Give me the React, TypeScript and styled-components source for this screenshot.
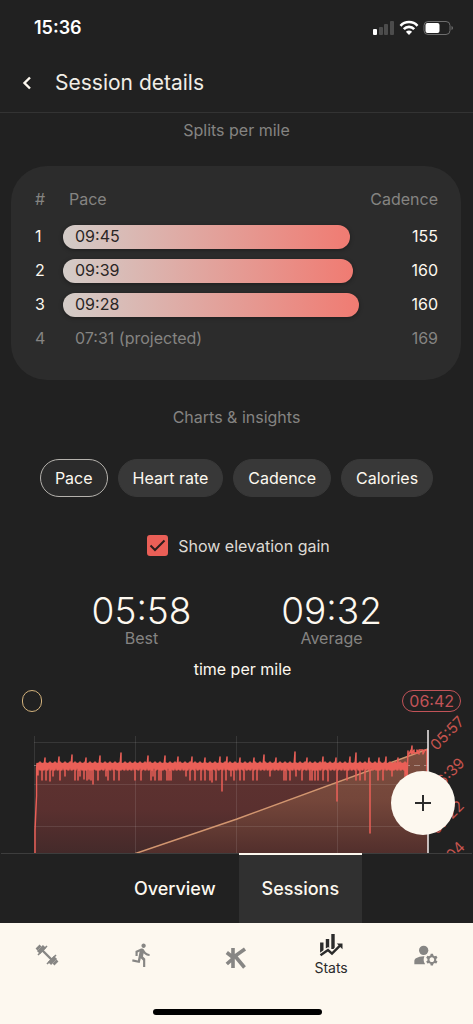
import React, { useState } from "react";
import styled, { createGlobalStyle } from "styled-components";
import { MdDirectionsRun, MdManageAccounts } from "react-icons/md";

const cream = "#fdf8ef";
const red = "#ea5f57";

const GlobalStyle = createGlobalStyle`
  *, *::before, *::after { box-sizing: border-box; }
  body {
    margin: 0;
    background: #000;
    color: ${cream};
    font: 400 16px/20px Inter, "Noto Sans", sans-serif;
  }
  button { font: inherit; color: inherit; border: 0; padding: 0; background: none; cursor: pointer; }
`;

const Screen = styled.div`
  display: flex;
  flex-direction: column;
  height: 100vh;
  background: #212121;
`;

const StatusBar = styled.div`
  display: flex;
  align-items: center;
  justify-content: space-between;
  height: 56px;
  padding: 0 19px 0 34px;
  color: #fff;
  font-size: 18px;
  font-weight: 600;
  flex-shrink: 0;
`;

const StatusIcons = styled.svg`
  width: 82px;
  height: 16px;
`;

const Header = styled.header`
  display: flex;
  align-items: center;
  gap: 17px;
  height: 57px;
  padding: 0 15px 2px;
  border-bottom: 1px solid #333;
  flex-shrink: 0;
`;

const BackButton = styled.button`
  display: grid;
  place-items: center;
  width: 23px;
  height: 32px;
`;

const Title = styled.h1`
  margin: 0;
  font-size: 21px;
  line-height: 28px;
  font-weight: 400;
  color: #f1ede6;
`;

const Body = styled.main`
  position: relative;
  flex: 1;
  min-height: 0;
  display: flex;
  flex-direction: column;
`;

const Scroller = styled.div`
  flex: 1;
  min-height: 0;
  overflow-x: hidden;
  overflow-y: auto;
  scrollbar-width: none;
  padding-top: 7px;
`;

const SectionTitle = styled.h2`
  margin: 0;
  text-align: center;
  font-size: 16px;
  line-height: 20px;
  font-weight: 400;
  color: #858482;
`;

const Card = styled.section`
  margin: 26px 12px 27px 11px;
  padding: 14px 23px 24px 24px;
  border-radius: 36px;
  background: #2c2c2c;
`;

const SplitsTable = styled.table`
  width: 100%;
  table-layout: fixed;
  border-collapse: collapse;
`;

const HeadCell = styled.th<{ $width?: number; $align?: string; $indent?: number }>`
  width: ${(p) => (p.$width ? `${p.$width}px` : "auto")};
  height: 40px;
  padding: 0 0 2px ${(p) => p.$indent ?? 0}px;
  text-align: ${(p) => p.$align ?? "left"};
  font-weight: 400;
  color: #858482;
`;

const Row = styled.tr<{ $muted?: boolean }>`
  height: 34px;
  color: ${(p) => (p.$muted ? "#858482" : cream)};
`;

const Cell = styled.td<{ $align?: string }>`
  padding: 0 0 2px;
  text-align: ${(p) => p.$align ?? "left"};
`;

const BarCell = styled.td`
  padding: 0;
`;

const PaceBar = styled.div<{ $filled: boolean }>`
  height: 24px;
  padding-left: 12px;
  line-height: 22px;
  border-radius: 12px;
  ${(p) =>
    p.$filled &&
    `
    color: #2a2625;
    background: linear-gradient(90deg, #d3ccc8, #f07b72);
    box-shadow: 0 1px 4px rgba(0, 0, 0, 0.35);
  `}
`;

const Chips = styled.div`
  display: flex;
  flex-wrap: wrap;
  justify-content: center;
  gap: 10px;
  margin-top: 32px;
`;

const Chip = styled.button<{ $active: boolean }>`
  height: 38px;
  padding: 0 14px;
  border: 1px solid ${(p) => (p.$active ? "#b5b2ad" : "#383838")};
  border-radius: 19px;
  background: ${(p) => (p.$active ? "#2b2b2b" : "#383838")};
`;

const CheckLabel = styled.label`
  display: flex;
  justify-content: center;
  align-items: center;
  gap: 10px;
  margin-top: 38px;
  padding-left: 4px;
  color: #dedad4;
`;

const CheckWrap = styled.span`
  position: relative;
  width: 21px;
  height: 21px;
  svg { position: absolute; inset: 0; pointer-events: none; }
`;

const CheckInput = styled.input`
  appearance: none;
  display: block;
  width: 21px;
  height: 21px;
  margin: 0;
  border: 2px solid ${red};
  border-radius: 3px;
  &:checked { background: ${red}; }
`;

const Figures = styled.div`
  display: grid;
  grid-template-columns: 190px 190px;
  justify-content: center;
  margin-top: 38px;
`;

const Figure = styled.div`
  text-align: center;
  color: #858482;
`;

const FigureValue = styled.div`
  font-size: 37px;
  line-height: 34px;
  font-weight: 300;
  color: ${cream};
`;

const Unit = styled.div`
  margin-top: 11px;
  padding-left: 12px;
  text-align: center;
`;

const Readouts = styled.div`
  display: flex;
  justify-content: space-between;
  margin-top: 11px;
  padding: 0 12px 0 22px;
`;

const Pill = styled.span<{ $tone: string }>`
  min-width: 20px;
  height: 22px;
  padding: 0 6px;
  line-height: 20px;
  border: 1px solid ${(p) => p.$tone};
  border-radius: 11px;
  color: ${(p) => p.$tone};
`;

const ChartSvg = styled.svg`
  display: block;
  width: 100%;
  margin-top: 18px;
  overflow: visible;
`;

const Fab = styled.button`
  position: absolute;
  right: 18px;
  bottom: 18px;
  display: grid;
  place-items: center;
  width: 64px;
  height: 64px;
  border-radius: 50%;
  background: ${cream};
`;

const Tabs = styled.div`
  display: flex;
  justify-content: center;
  height: 70px;
  margin: 0 1px;
  border-top: 1px solid #3d3d3d;
  flex-shrink: 0;
`;

const Tab = styled.button<{ $active: boolean }>`
  margin-top: -1px;
  padding: 0 23px;
  border-top: 2px solid ${(p) => (p.$active ? cream : "transparent")};
  background: ${(p) => (p.$active ? "#303030" : "transparent")};
  font-size: 18px;
  font-weight: 500;
`;

const BottomNav = styled.nav`
  display: grid;
  grid-template-columns: repeat(5, 1fr);
  height: 101px;
  padding-top: 8px;
  position: relative;
  background: ${cream};
  flex-shrink: 0;
`;

const NavButton = styled.button<{ $active?: boolean }>`
  display: flex;
  flex-direction: column;
  align-items: center;
  justify-content: center;
  gap: 2px;
  height: 48px;
  font-size: 14px;
  line-height: 18px;
  color: ${(p) => (p.$active ? "#2b2b2b" : "#878684")};
`;

const HomeIndicator = styled.div`
  position: absolute;
  bottom: 9px;
  left: 50%;
  width: 169px;
  height: 6px;
  margin-left: -84px;
  border-radius: 3px;
  background: #000;
`;

const splits = [
  { n: 1, pace: "09:45", share: 97, cadence: 155 },
  { n: 2, pace: "09:39", share: 98, cadence: 160 },
  { n: 3, pace: "09:28", share: 100, cadence: 160 },
  { n: 4, pace: "07:31 (projected)", share: 0, cadence: 169 },
];

const peaks: Record<number, number> = {
  45: 28, 59: 27, 72: 25, 86: 28, 100: 26, 121: 23, 148: 26, 165: 26, 178: 27, 192: 27, 205: 28,
  220: 27, 227: 27, 240: 28, 254: 28, 264: 25, 276: 28, 295: 22, 307: 28, 323: 27, 336: 28,
  350: 27, 356: 23, 369: 28, 379: 28, 386: 27, 398: 28,
};
const dips: Record<number, number> = {
  38: 45, 42: 50, 46: 50, 50: 51, 53: 46, 60: 50, 65: 46, 75: 50, 78: 50, 80: 46, 84: 49, 87: 50,
  89: 49, 91: 50, 93: 54, 98: 50, 106: 46, 108: 50, 114: 50, 119: 50, 135: 50, 141: 50, 151: 50,
  153: 46, 155: 50, 159: 50, 161: 50, 167: 50, 169: 50, 171: 50, 186: 46, 190: 50, 195: 50,
  201: 50, 205: 50, 210: 50, 212: 52, 216: 50, 222: 61, 226: 50, 231: 46, 234: 50, 240: 50,
  244: 50, 253: 50, 257: 50, 270: 46, 284: 50, 286: 50, 290: 50, 296: 46, 302: 50, 310: 50,
  312: 50, 315: 50, 318: 50, 323: 50, 328: 51, 337: 71, 347: 50, 356: 50, 360: 50, 365: 50,
  370: 103, 378: 50, 383: 50, 392: 46, 405: 48,
};

const paceTrace = (() => {
  let d = "M35 134V100L36.500 66V38";
  for (let x = 37; x < 407; x += 1) {
    const top = peaks[x] ?? 32 + ((x * x * 7) % 5) / 2;
    const low = dips[x] ?? 38 + ((x * x * 5) % 7) / 3;
    d += `L${x} ${top}V${low}L${x} 36`;
  }
  return `${d}L407 50L408 21V26L411 20V23L412 16V24L414 20V23H417V20L419 24V20H423V24L425 20H427V60`;
})();

const axis = ["05:57", "06:39", "07:22", "08:04"];

function Chart({ elevation }: { elevation: boolean }) {
  return (
    <ChartSvg viewBox="0 0 473 134" role="img" aria-label="Pace over time">
      <defs>
        <linearGradient id="paceFill" x1="0" y1="36" x2="0" y2="123" gradientUnits="userSpaceOnUse">
          <stop offset="0" stopColor="#5e3230" />
          <stop offset="0.5" stopColor="#5a302f" />
          <stop offset="1" stopColor="#442a2a" />
        </linearGradient>
        <linearGradient id="elevationFill" x1="0" y1="20" x2="0" y2="123" gradientUnits="userSpaceOnUse">
          <stop offset="0" stopColor="#7d4f40" />
          <stop offset="0.5" stopColor="#74463a" />
          <stop offset="1" stopColor="#522f2c" />
        </linearGradient>
      </defs>
      <path d="M35 134V100L37 36H407L409 22H428V134Z" fill="url(#paceFill)" />
      {elevation && <path d="M104 134L137 123L237 89L428 19V134Z" fill="url(#elevationFill)" />}
      <path
        d="M34.500 6V134M135.500 6V134M236.500 6V134M337.500 6V134M34 12.500H428M34 54.500H428M34 96.500H428"
        stroke="#fff"
        strokeOpacity="0.1"
      />
      <path d="M34 35.500H428" stroke="#fff" strokeOpacity="0.35" strokeDasharray="6 4" />
      {elevation && <path d="M104 134L137 123L237 89L428 19" fill="none" stroke="#d29670" strokeWidth="1.500" />}
      <path d={paceTrace} fill="none" stroke={red} strokeWidth="1.500" strokeLinejoin="round" />
      <path d="M428 0V134" stroke="#f3eeee" strokeWidth="1.500" />
      {axis.map((label, i) => (
        <text
          key={label}
          transform={`translate(447 ${3 + i * 42}) rotate(-45)`}
          textAnchor="middle"
          dominantBaseline="central"
          fontSize="15"
          fill="#c6544e"
        >
          {label}
        </text>
      ))}
    </ChartSvg>
  );
}

function DumbbellIcon() {
  return (
    <svg width="24" height="24" viewBox="0 0 24 24" fill="none" stroke="currentColor">
      <path d="M6 6L18 18" strokeWidth="2.400" />
      <path d="M3.500 9.500L9.500 3.500M14.500 20.500L20.500 14.500" strokeWidth="4.400" />
      <path d="M3 12L12 3M12 21L21 12" strokeWidth="1.600" />
      <path d="M1.500 6.500L5.500 2.500M18.500 21.500L22.500 17.500" strokeWidth="2.600" />
    </svg>
  );
}

function BrandIcon() {
  return (
    <svg width="22" height="30" viewBox="0 0 22 30" fill="none" stroke="currentColor" strokeWidth="3.600">
      <path d="M8 8V28M1.800 12.500L8 17.500L20 9M1.800 24L8 18.500M10 16L19.500 27.500" />
    </svg>
  );
}

function StatsIcon() {
  return (
    <svg width="24" height="24" viewBox="0 0 24 24" fill="none" stroke="currentColor">
      <path d="M2.800 9.500V20M8.500 6V15.500M14 1V16" strokeWidth="3.400" />
      <path d="M1.500 22L9 16.800L13 20.500L21 12.500" stroke={cream} strokeWidth="4.400" />
      <path d="M1.500 22.300L9 17L13 20.700L21.500 12.200" strokeWidth="2.400" />
      <path d="M17.800 10.500H23.500V16.200Z" fill="currentColor" stroke="none" />
    </svg>
  );
}

const chips = ["Pace", "Heart rate", "Cadence", "Calories"];

export default function App() {
  const [metric, setMetric] = useState("Pace");
  const [elevation, setElevation] = useState(true);
  const [tab, setTab] = useState("Sessions");

  return (
    <Screen>
      <GlobalStyle />
      <StatusBar>
        <span>15:36</span>
        <StatusIcons viewBox="0 0 82 16" aria-hidden="true">
          <rect x="1" y="9" width="4" height="6" rx="1" fill="#fff" />
          <g fill="#4c4c4c">
            <rect x="7" y="7" width="4" height="8" rx="1" />
            <rect x="12" y="4" width="4" height="11" rx="1" />
            <rect x="18" y="1" width="4" height="14" rx="1" />
          </g>
          <g fill="none" stroke="#fff" strokeWidth="2.600">
            <path d="M28.500 5.800A11.500 11.500 0 0 1 45.500 5.800" />
            <path d="M31.800 9.200A7 7 0 0 1 42.200 9.200" />
          </g>
          <path d="M37 15L33.900 11.800A4.600 4.600 0 0 1 40.100 11.800Z" fill="#fff" />
          <rect x="52" y="1.500" width="26" height="13" rx="4" fill="none" stroke="#6e6e6e" />
          <rect x="53.500" y="3" width="14" height="10" rx="2" fill="#fff" />
          <path d="M79.500 6V10Q81 9.500 81 8Q81 6.500 79.500 6Z" fill="#6e6e6e" />
        </StatusIcons>
      </StatusBar>
      <Header>
        <BackButton aria-label="Back">
          <svg width="12" height="14" viewBox="0 0 12 14" fill="none" stroke={cream} strokeWidth="2.400">
            <path d="M9 1.500L3.500 7L9 12.500" />
          </svg>
        </BackButton>
        <Title>Session details</Title>
      </Header>
      <Body>
        <Scroller>
          <SectionTitle>Splits per mile</SectionTitle>
          <Card>
            <SplitsTable>
              <thead>
                <tr>
                  <HeadCell $width={28}>#</HeadCell>
                  <HeadCell $indent={6}>Pace</HeadCell>
                  <HeadCell $width={79} $align="right">Cadence</HeadCell>
                </tr>
              </thead>
              <tbody>
                {splits.map((s) => (
                  <Row key={s.n} $muted={!s.share}>
                    <Cell>{s.n}</Cell>
                    <BarCell>
                      <PaceBar $filled={s.share > 0} style={{ width: s.share ? `${s.share}%` : "100%" }}>
                        {s.pace}
                      </PaceBar>
                    </BarCell>
                    <Cell $align="right">{s.cadence}</Cell>
                  </Row>
                ))}
              </tbody>
            </SplitsTable>
          </Card>
          <SectionTitle>Charts &amp; insights</SectionTitle>
          <Chips>
            {chips.map((c) => (
              <Chip key={c} $active={c === metric} onClick={() => setMetric(c)}>
                {c}
              </Chip>
            ))}
          </Chips>
          <CheckLabel>
            <CheckWrap>
              <CheckInput type="checkbox" checked={elevation} onChange={(e) => setElevation(e.target.checked)} />
              {elevation && (
                <svg width="21" height="21" viewBox="0 0 21 21" fill="none" stroke="#2b1d1c" strokeWidth="2">
                  <path d="M3.500 10.500L8 15L17.500 5.500" />
                </svg>
              )}
            </CheckWrap>
            Show elevation gain
          </CheckLabel>
          <Figures>
            <Figure>
              <FigureValue>05:58</FigureValue>
              Best
            </Figure>
            <Figure>
              <FigureValue>09:32</FigureValue>
              Average
            </Figure>
          </Figures>
          <Unit>time per mile</Unit>
          <Readouts>
            <Pill $tone="#d3b27c" />
            <Pill $tone="#c25358">06:42</Pill>
          </Readouts>
          <Chart elevation={elevation} />
        </Scroller>
        <Fab aria-label="Add">
          <svg width="16" height="16" viewBox="0 0 16 16" stroke="#2b2b2b" strokeWidth="2">
            <path d="M8 0V16M0 8H16" />
          </svg>
        </Fab>
      </Body>
      <Tabs>
        {["Overview", "Sessions"].map((t) => (
          <Tab key={t} $active={t === tab} onClick={() => setTab(t)}>
            {t}
          </Tab>
        ))}
      </Tabs>
      <BottomNav>
        <NavButton aria-label="Workouts"><DumbbellIcon /></NavButton>
        <NavButton aria-label="Running"><MdDirectionsRun size={26} /></NavButton>
        <NavButton aria-label="Home"><BrandIcon /></NavButton>
        <NavButton $active>
          <StatsIcon />
          Stats
        </NavButton>
        <NavButton aria-label="Account"><MdManageAccounts size={28} /></NavButton>
        <HomeIndicator />
      </BottomNav>
    </Screen>
  );
}
